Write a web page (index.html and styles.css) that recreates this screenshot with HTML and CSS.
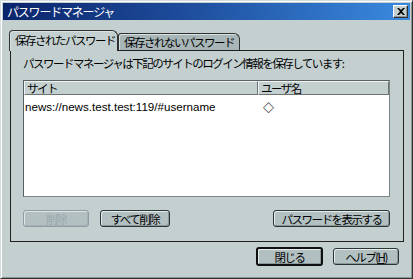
FILE: index.html
```html
<!DOCTYPE html>
<html lang="ja">
<head>
<meta charset="utf-8">
<link rel="stylesheet" href="styles.css">
</head>
<body>
<div class="window">
  <div class="titlebar">
    <span class="title ja">パスワードマネージャ</span>
    <span class="close"><svg width="8" height="7" viewBox="0 0 8 7"><path d="M0 0h2l2 2 2-2h2L5 3.5 8 7H6L4 5 2 7H0l3-3.5z" fill="#000"/></svg></span>
  </div>
  <div class="tabs">
    <div class="tab active ja">保存されたパスワード</div>
    <div class="tab ja">保存されないパスワード</div>
  </div>
  <div class="panel">
    <div class="intro ja">パスワードマネージャは下記のサイトのログイン情報を保存しています:</div>
    <div class="list">
      <div class="head">
        <div class="col site ja">サイト</div>
        <div class="col user ja">ユーザ名</div>
      </div>
      <div class="row">
        <div class="cell site latin">news://news.test.test:119/#username</div>
        <div class="cell user">◇</div>
      </div>
    </div>
    <div class="actions">
      <button class="btn disabled w66 ja">削除</button>
      <button class="btn w70 ja">すべて削除</button>
      <span class="spacer"></span>
      <button class="btn w117 ja">パスワードを表示する</button>
    </div>
  </div>
  <div class="footer">
    <button class="btn default w67 ja">閉じる</button>
    <button class="btn w66 ja">ヘルプ(<u>H</u>)</button>
  </div>
</div>
</body>
</html>
```
FILE: styles.css
```css
html, body {
  margin: 0;
  padding: 0;
  background: #c4d0d0;
}
body {
  font-family: "Liberation Sans", "Noto Sans CJK JP", sans-serif;
  font-size: 11px;
  color: #000;
}
.ja {
  font-family: "Noto Sans CJK JP", sans-serif;
  font-size: 11.5px;
  letter-spacing: -1.5px;
  white-space: nowrap;
}
.latin {
  font-family: "Liberation Sans", sans-serif;
  font-size: 11.6px;
}
.window {
  width: 413px;
  height: 279px;
  box-sizing: border-box;
  background: #c4d0d0;
  border-top: 1px solid #d4dcdc;
  border-left: 1px solid #d4dcdc;
  border-right: 1px solid #303030;
  border-bottom: 1px solid #303030;
  box-shadow: inset 1px 1px 0 #ffffff, inset -1px -1px 0 #8a9696;
  padding: 2px 2px 0 2px;
  display: flex;
  flex-direction: column;
}
.titlebar {
  height: 17px;
  background: linear-gradient(90deg, #0a246a 0%, #1e4d9c 45%, #3a8ae0 100%);
  display: flex;
  align-items: center;
  justify-content: space-between;
  padding: 0 2px 0 4px;
}
.title {
  color: #fff;
  font-size: 12px;
  letter-spacing: -1.2px;
  line-height: 17px;
}
.close {
  width: 15px;
  height: 13px;
  box-sizing: border-box;
  background: #c4d0d0;
  border-top: 1px solid #fff;
  border-left: 1px solid #fff;
  border-right: 1px solid #303030;
  border-bottom: 1px solid #303030;
  box-shadow: inset -1px -1px 0 #8a9696;
  display: flex;
  align-items: center;
  justify-content: center;
}
.tabs {
  display: flex;
  align-items: flex-end;
  margin-top: 10px;
  padding-left: 6px;
  height: 21px;
  position: relative;
  z-index: 1;
}
.tab {
  box-sizing: border-box;
  border: 1px solid #303030;
  border-bottom: none;
  border-radius: 3px 6px 0 0;
  padding: 0 0 0 5px;
  line-height: 16px;
  height: 17px;
  background: #a8b6b8;
  box-shadow: inset 1px 1px 0 #d8e2e2;
}
.tab.active {
  background: #c4d0d0;
  height: 21px;
  line-height: 19px;
  width: 109px;
  border-radius: 4px 6px 0 0;
}
.tab:not(.active) {
  width: 122px;
  margin-bottom: 1px;
}
.panel {
  margin: -1px 6px 0 7px;
  height: 192px;
  box-sizing: border-box;
  border: 1px solid #202020;
  padding: 6px 13px 0 12px;
  display: flex;
  flex-direction: column;
}
.intro {
  line-height: 13px;
  height: 13px;
}
.list {
  margin-top: 10px;
  height: 117px;
  box-sizing: border-box;
  background: #fff;
  border: 1px solid #5a6060;
  border-right-color: #7c8484;
  border-bottom-color: #7c8484;
}
.head {
  display: flex;
  height: 14px;
}
.col {
  box-sizing: border-box;
  background: #c4d0d0;
  border-top: 1px solid #eef4f4;
  border-left: 1px solid #eef4f4;
  border-right: 1px solid #6c7474;
  border-bottom: 1px solid #6c7474;
  line-height: 12px;
  padding-left: 2px;
}
.col.site { width: 234px; }
.col.user { width: 131px; }
.row {
  display: flex;
  margin-top: 5px;
  line-height: 14px;
}
.cell.site { width: 238px; padding-left: 1px; }
.cell.user {
  font-family: "Noto Sans CJK JP", sans-serif;
  font-size: 11px;
  font-weight: bold;
}
.actions {
  display: flex;
  gap: 11px;
  margin-top: 13px;
}
.spacer { flex: 1; }
.btn {
  color: #000;
  height: 17px;
  box-sizing: border-box;
  padding: 0;
  border: 1px solid #2c3434;
  border-radius: 3px;
  background-color: #b2c0c2;
  background-image: radial-gradient(#a2b0b4 0.5px, transparent 0.6px);
  background-size: 2px 2px;
  box-shadow: inset 1px 1px 0 #e4ecec, inset -1px -1px 0 #8a9898;
  line-height: 14px;
  text-align: center;
}
.btn.disabled {
  color: #9aa8ac;
  border-color: #8c9ca2;
  box-shadow: inset 1px 1px 0 #dde6e6, inset -1px -1px 0 #a4b2b4;
}
.btn.default {
  border: 2px solid #101010;
  height: 19px;
  line-height: 14px;
}
.w66 { width: 66px; }
.w67 { width: 67px; }
.w70 { width: 70px; }
.w117 { width: 117px; }
.footer {
  display: flex;
  justify-content: flex-end;
  align-items: center;
  gap: 10px;
  padding-right: 11px;
  margin-top: 5px;
}
.btn u { text-decoration: underline; }
```
